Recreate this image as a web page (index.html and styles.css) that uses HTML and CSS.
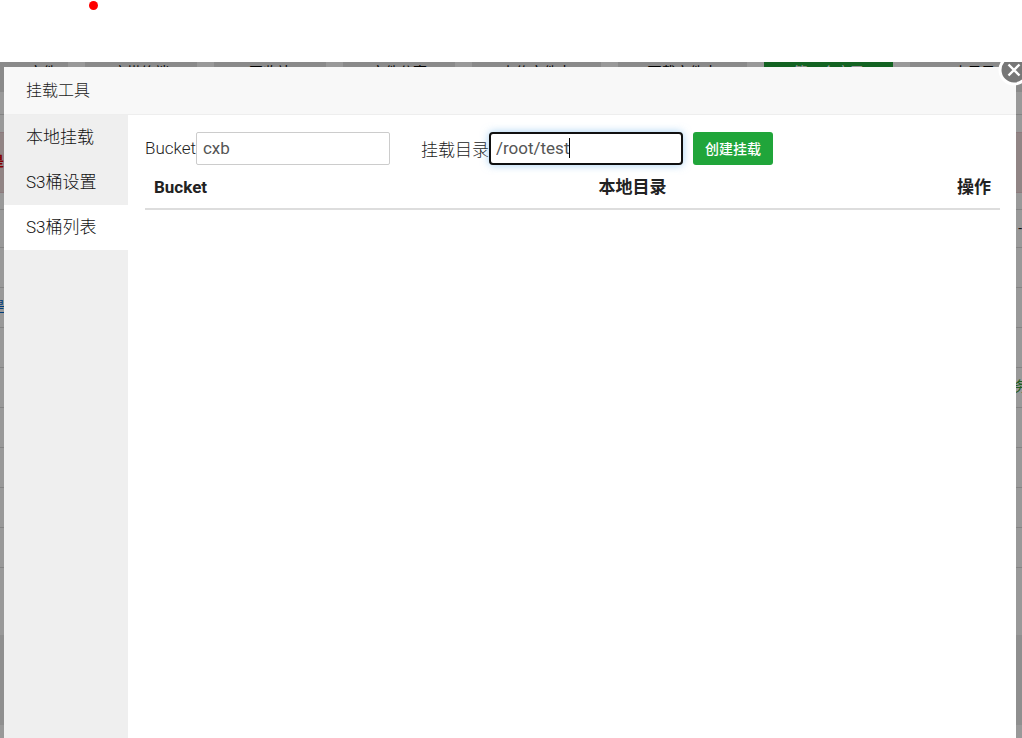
FILE: index.html
```html
<!DOCTYPE html>
<html lang="zh-CN">

<head>
    <meta charset="UTF-8">
    <meta name="viewport" content="width=device-width, initial-scale=1.0">
    <title>挂载工具</title>
    <link rel="stylesheet" href="styles.css">
</head>

<body>
    <header class="topbar">
        <span class="topbar_dot"></span>
    </header>
    <div class="workspace">
        <div class="page">
            <nav class="page_tabs">
                <span class="page_tab page_tab_first">三 文件</span>
                <span class="page_tab">宝塔终端</span>
                <span class="page_tab">回收站</span>
                <span class="page_tab">文件分享</span>
                <span class="page_tab page_tab_wide">上传文件夹</span>
                <span class="page_tab page_tab_wide">下载文件夹</span>
                <span class="page_tab page_tab_wide page_tab_green">第一个应用</span>
                <span class="page_tab page_tab_wide">小目录</span>
            </nav>
            <div class="page_line"></div>
            <div class="page_alert">是</div>
            <ul class="page_list">
                <li class="page_row_head"></li>
                <li><span></span><span>-</span></li>
                <li></li>
                <li><a href="#">是</a></li>
                <li></li>
                <li><span></span><a href="#" class="page_link_green">务</a></li>
                <li></li>
                <li></li>
                <li></li>
                <li></li>
            </ul>
            <div class="page_footer"></div>
        </div>
        <div class="mask"></div>

        <div class="modal" role="dialog" aria-labelledby="modalTitle">
            <div class="modal_title" id="modalTitle">挂载工具</div>
            <button type="button" class="modal_close" aria-label="关闭">
                <svg width="32" height="32" viewBox="0 0 32 32">
                    <circle cx="16" cy="16" r="14" fill="#777" stroke="#fff" stroke-width="3" />
                    <path d="M10.5 10.5l11 11M21.5 10.5l-11 11" stroke="#fff" stroke-width="2.4" />
                </svg>
            </button>
            <div class="modal_body">
                <nav class="menu">
                    <a href="#">本地挂载</a>
                    <a href="#">S3桶设置</a>
                    <a href="#" class="menu_checked">S3桶列表</a>
                </nav>
                <main class="content">
                    <form action="#" class="mount_form">
                        <label for="bucket">Bucket</label>
                        <input type="text" id="bucket" value="cxb">
                        <label for="path" class="path_label">挂载目录</label>
                        <div class="path_box">
                            <input type="text" id="path" class="input_active" value="/root/test">
                            <span class="caret"></span>
                        </div>
                        <button type="button" class="btn_create">创建挂载</button>
                    </form>
                    <table class="mount_list">
                        <thead>
                            <tr>
                                <th class="col_bucket">Bucket</th>
                                <th>本地目录</th>
                                <th class="col_action">操作</th>
                            </tr>
                        </thead>
                        <tbody></tbody>
                    </table>
                </main>
            </div>
        </div>
    </div>
</body>

</html>
```

FILE: styles.css
```css
* {
    margin: 0;
    padding: 0;
    box-sizing: border-box;
}

body {
    display: flex;
    flex-direction: column;
    height: 100vh;
    overflow: hidden;
    background-color: #fff;
    color: #222;
    font-family: Roboto, "Noto Sans CJK SC", sans-serif;
    font-size: 17px;
}

a {
    color: inherit;
    text-decoration: none;
}

.topbar {
    height: 62px;
    flex-shrink: 0;
    padding: 1px 89px;
}

.topbar_dot {
    display: block;
    width: 9px;
    height: 9px;
    border-radius: 50%;
    background-color: #f00;
}

.workspace {
    position: relative;
    flex-grow: 1;
    overflow: hidden;
}


/* 底层页面 */

.page {
    display: flex;
    flex-direction: column;
    height: 100%;
    font-size: 14px;
}

.page_tabs {
    display: flex;
    gap: 17px;
    height: 30px;
    overflow: hidden;
}

.page_tab {
    flex: 0 0 112px;
    background-color: #e6e6e6;
    color: #000;
    line-height: 20px;
    text-align: center;
}

.page_tab_first {
    flex-basis: 68px;
}

.page_tab_wide {
    flex-basis: 129px;
}

.page_tab_green {
    background-color: #20a53a;
    color: #fff;
}

.page_line {
    height: 23px;
    border-bottom: 1px solid #ddd;
}

.page_alert {
    height: 61px;
    margin-top: 17px;
    border: solid #ebccd1;
    border-width: 1px 0;
    background-color: #f2dede;
    color: #d00;
    font-weight: bold;
    line-height: 56px;
    text-indent: -10px;
}

.page_list {
    list-style: none;
}

.page_list li {
    display: flex;
    justify-content: space-between;
    height: 40px;
    border-bottom: 1px solid #ddd;
    line-height: 36px;
}

.page_list .page_row_head {
    height: 17px;
}

.page_list li:nth-child(2) {
    height: 38px;
}

.page_list a {
    margin-left: -9px;
    color: #06c;
}

.page_list .page_link_green {
    margin-right: -6px;
    color: #393;
}

.page_footer {
    flex-grow: 1;
    margin-top: 67px;
    border-bottom: 13px solid #fff;
    background-color: #eee;
}

.mask {
    position: absolute;
    inset: 0;
    background-color: rgba(0, 0, 0, 0.4);
}


/* 弹窗 */

.modal {
    position: absolute;
    inset: 5px 6px 0 4px;
    display: flex;
    flex-direction: column;
    background-color: #fff;
}

.modal_title {
    height: 48px;
    padding-left: 22px;
    border-bottom: 1px solid #eee;
    background-color: #f8f8f8;
    font-size: 16px;
    font-weight: 300;
    line-height: 48px;
}

.modal_close {
    position: absolute;
    top: -13px;
    right: -14px;
    width: 32px;
    height: 32px;
    border: none;
    background: none;
    cursor: pointer;
}

.modal_close svg {
    display: block;
}

.modal_body {
    display: flex;
    flex-grow: 1;
}

.menu {
    width: 124px;
    background-color: #efefef;
}

.menu a {
    display: block;
    height: 45px;
    padding-left: 22px;
    color: #111;
    font-weight: 300;
    line-height: 45px;
}

.menu .menu_checked {
    background-color: #fff;
}

.content {
    flex-grow: 1;
    padding: 16px 16px 16px 17px;
}

.mount_form {
    display: flex;
    align-items: center;
    height: 34px;
}

.mount_form input {
    display: block;
    width: 194px;
    height: 33px;
    padding: 0 6px;
    border: 1px solid #ccc;
    border-radius: 2px;
    color: #555;
    font: inherit;
}

.mount_form label {
    font-weight: 300;
}

.mount_form .path_label {
    margin-left: 31px;
}

.path_box {
    position: relative;
}

.path_box .input_active {
    padding: 0 5px;
    border: 2px solid #101010;
    border-radius: 4px;
    outline: none;
    box-shadow: 0 0 8px rgba(102, 175, 233, 0.6);
}

.caret {
    position: absolute;
    top: 6px;
    left: 80px;
    width: 1px;
    height: 20px;
    background-color: #000;
}

.btn_create {
    height: 33px;
    margin-left: 10px;
    padding: 0 12px;
    border: none;
    border-radius: 3px;
    background-color: #20a53a;
    color: #fff;
    font-family: inherit;
    font-size: 14px;
    font-weight: 500;
    cursor: pointer;
}

.mount_list {
    width: 100%;
    border-collapse: collapse;
}

.mount_list th {
    height: 44px;
    padding: 0 9px;
    border-bottom: 2px solid #ddd;
    line-height: 24px;
    text-align: left;
}

.mount_list .col_bucket {
    width: 52%;
}

.mount_list .col_action {
    text-align: right;
}
```
